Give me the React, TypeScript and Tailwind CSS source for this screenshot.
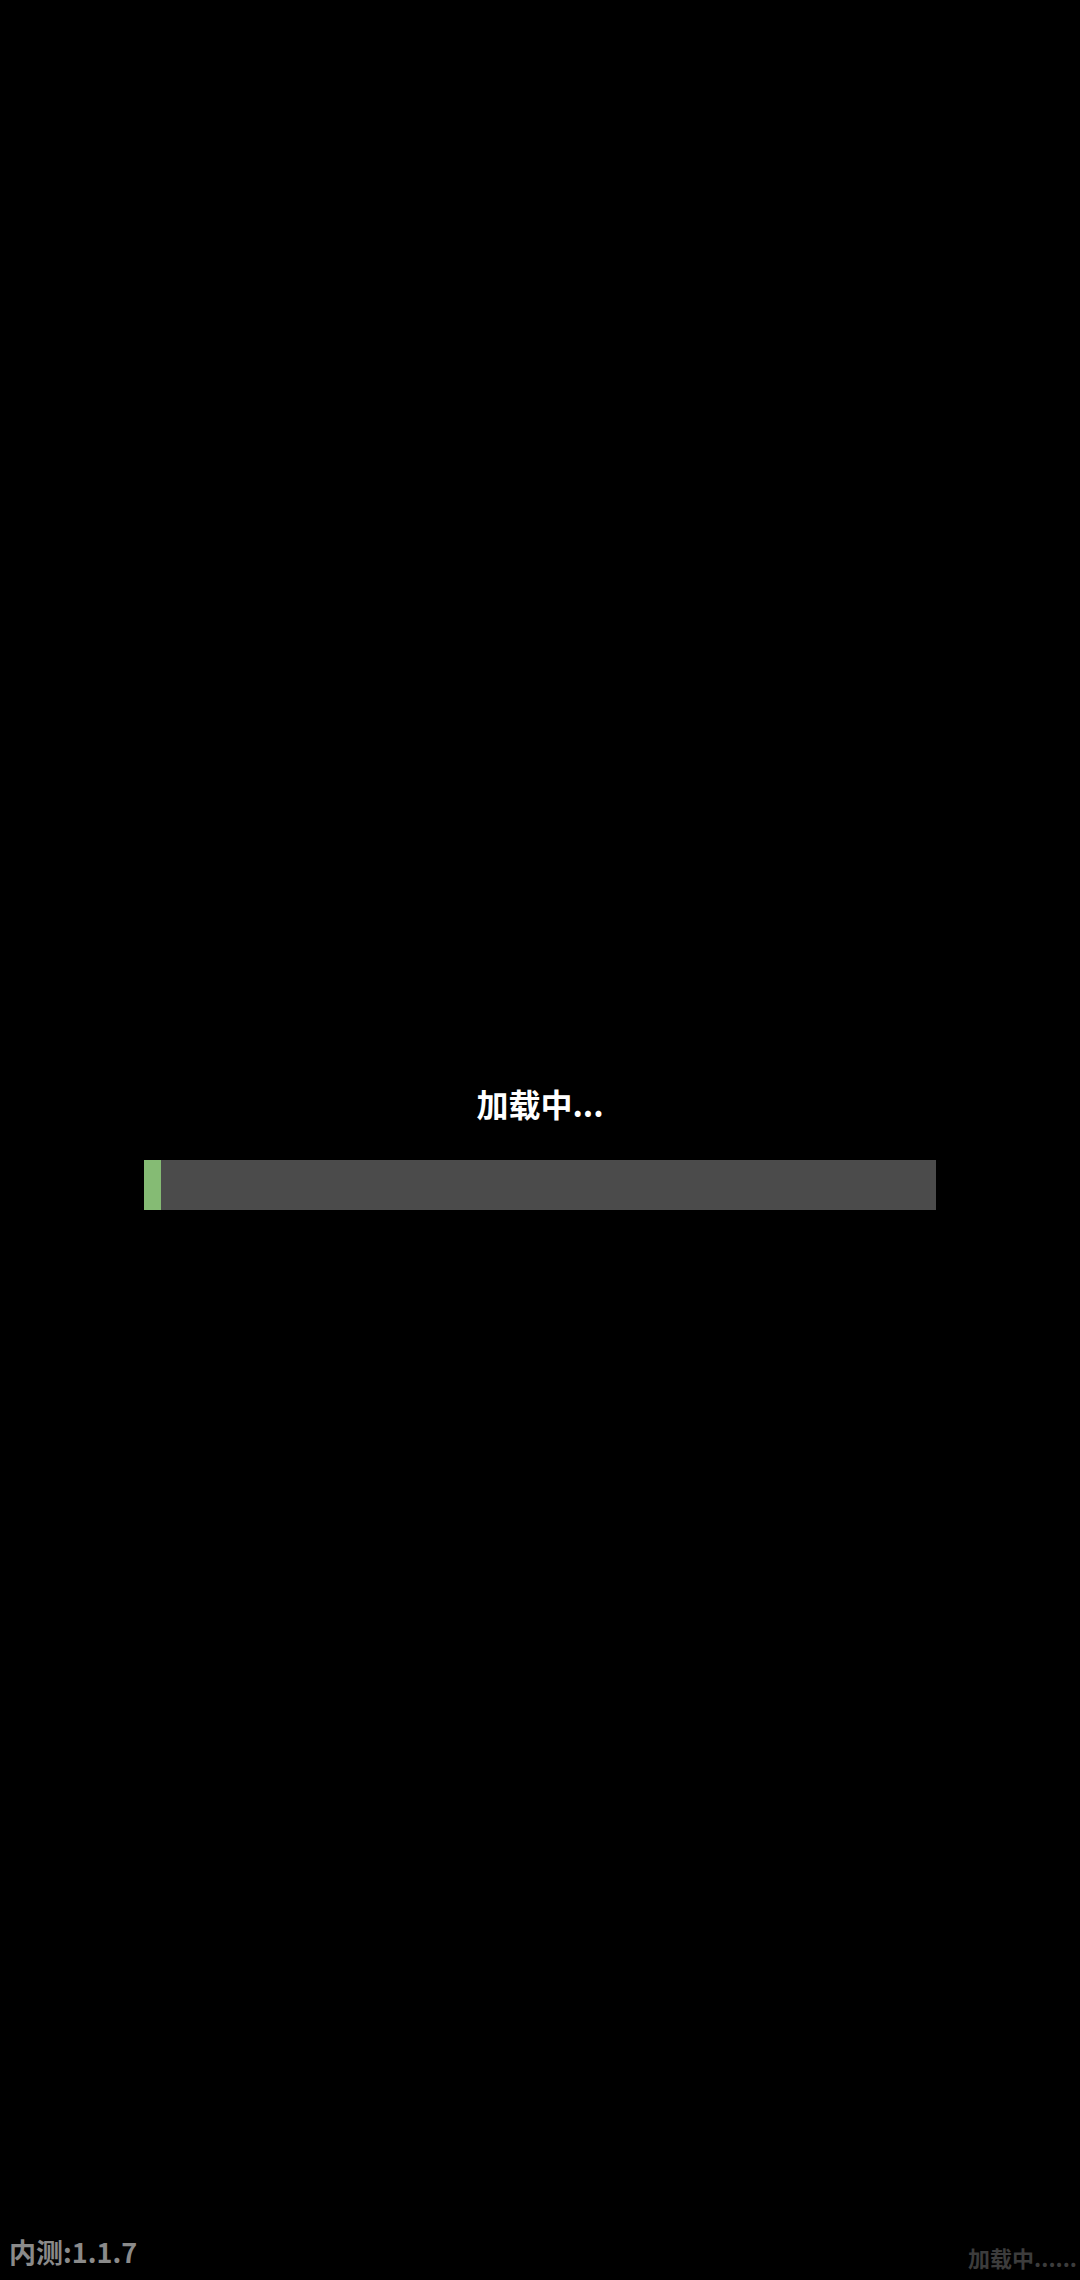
import React from "react";

const progress = 2; // percent loaded

const App = () => {
  return (
    <div
      className="w-[1080px] h-[2280px] bg-black flex flex-col overflow-hidden"
      style={{ fontFamily: '"Noto Sans CJK SC", "Noto Sans", sans-serif' }}
    >
      {/* Loading block */}
      <div className="flex-1 flex flex-col items-center pt-[1083px]">
        <div className="text-[32px] leading-[40px] font-bold text-white">
          加载中...
        </div>
        <div className="mt-[37px] w-[792px] h-[50px] bg-[#4b4b4b] flex">
          <div
            className="h-full bg-[#85bb74]"
            style={{ width: `${(progress / 100) * 792 + 1}px` }}
          />
        </div>
      </div>

      {/* Footer */}
      <div className="flex items-end justify-between pl-[9px] pr-[3px] pb-[9px]">
        <div className="mb-[3px] text-[27px] leading-[32px] font-bold text-[#8a8a8a]">
          内测:1.1.7
        </div>
        <div className="text-[22px] leading-[28px] font-bold text-[#3c3c3c] whitespace-nowrap">
          加载中......
        </div>
      </div>
    </div>
  );
};

export default App;
